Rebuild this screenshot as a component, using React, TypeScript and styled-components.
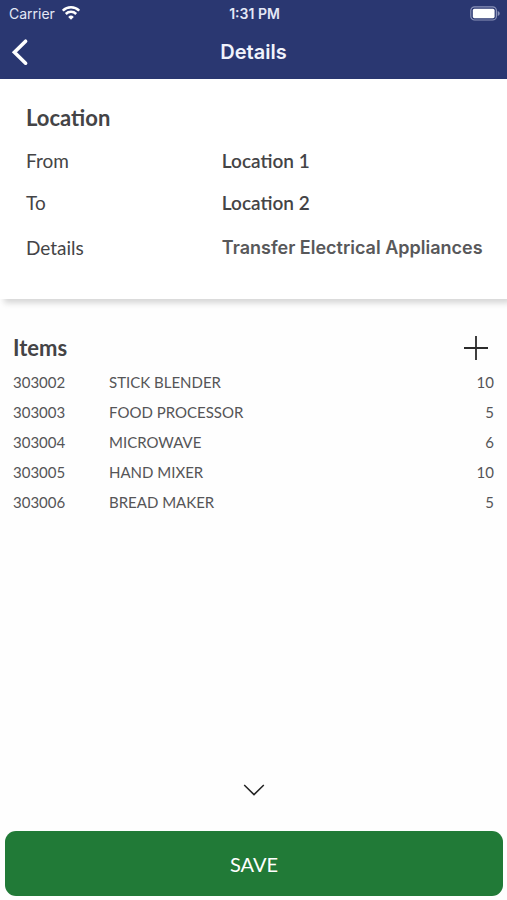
import React from "react";
import styled, { createGlobalStyle } from "styled-components";

const GlobalStyle = createGlobalStyle`
  *, *::before, *::after { box-sizing: border-box; }
  body {
    margin: 0;
    background: #fefefe;
    color: #444446;
    font-family: Lato, "Liberation Sans", sans-serif;
  }
  button { font: inherit; color: inherit; border: 0; background: none; padding: 0; cursor: pointer; }
`;

const Screen = styled.div`
  display: flex;
  flex-direction: column;
  min-height: 100vh;
`;

const Header = styled.header`
  background: #2a3771;
  color: #fff;
  font-family: Inter, "Liberation Sans", sans-serif;
`;

const StatusBar = styled.div`
  display: grid;
  grid-template-columns: 1fr auto 1fr;
  align-items: center;
  height: 26px;
  padding: 0 7px 0 9px;
  font-size: 14px;
  color: #e4e8f6;
`;

const Carrier = styled.span`
  display: flex;
  align-items: center;
  gap: 7px;
`;

const Clock = styled.time`
  font-weight: 600;
`;

const BatteryIcon = styled.svg`
  justify-self: end;
`;

const NavBar = styled.nav`
  display: grid;
  grid-template-columns: 1fr auto 1fr;
  align-items: center;
  height: 53px;
  padding: 0 10px 2px;
`;

const BackButton = styled.button`
  display: flex;
  justify-self: start;
`;

const NavTitle = styled.h1`
  margin: 0;
  font-size: 20px;
  font-weight: 600;
  line-height: 24px;
  color: #f1f3fc;
`;

const LocationCard = styled.section`
  padding: 24px 24px 34px 26px;
  background: #fff;
  box-shadow: 4px 4px 6px rgba(0, 0, 0, 0.16);
`;

const SectionTitle = styled.h2`
  margin: 0;
  font-size: 22px;
  font-weight: 700;
  line-height: 30px;
`;

const FieldList = styled.dl`
  display: flex;
  flex-direction: column;
  gap: 13px;
  margin: 13px 0 0;
`;

const Field = styled.div<{ $tall?: boolean }>`
  display: grid;
  grid-template-columns: 3fr 4fr;
  align-items: center;
  min-height: ${({ $tall }) => ($tall ? "35px" : "29px")};
  font-size: 19px;
  line-height: 29px;
`;

const FieldLabel = styled.dt``;

const FieldValue = styled.dd<{ $system?: boolean }>`
  margin: 0;
  font-weight: 600;
  white-space: nowrap;
  ${({ $system }) =>
    $system &&
    `
    font-family: Inter, "Liberation Sans", sans-serif;
    font-size: 18px;
    color: #58585a;
  `}
`;

const ItemsSection = styled.section`
  flex: 1;
  padding: 34px 13px 0;
`;

const ItemsHeader = styled.div`
  display: flex;
  align-items: center;
  justify-content: space-between;
  padding-right: 5px;
  line-height: 30px;
`;

const IconButton = styled.button`
  display: flex;
`;

const ItemTable = styled.table`
  width: 100%;
  margin-top: 4px;
  border-collapse: collapse;
  font-size: 15px;
  line-height: 30px;
  color: #555557;
`;

const Cell = styled.td`
  padding: 0;
`;

const CodeCell = styled(Cell)`
  width: 96px;
`;

const QuantityCell = styled(Cell)`
  text-align: right;
`;

const Footer = styled.footer`
  display: flex;
  flex-direction: column;
  align-items: center;
  gap: 34px;
  padding: 0 4px 4px 5px;
`;

const SaveButton = styled.button`
  width: 100%;
  height: 65px;
  border-radius: 11px;
  background: #217a37;
  color: #fff;
  font-size: 20px;
`;

const fields = [
  { label: "From", value: "Location 1" },
  { label: "To", value: "Location 2" },
  { label: "Details", value: "Transfer Electrical Appliances", system: true },
];

const items = [
  { code: "303002", name: "STICK BLENDER", quantity: 10 },
  { code: "303003", name: "FOOD PROCESSOR", quantity: 5 },
  { code: "303004", name: "MICROWAVE", quantity: 6 },
  { code: "303005", name: "HAND MIXER", quantity: 10 },
  { code: "303006", name: "BREAD MAKER", quantity: 5 },
];

const Wifi = () => (
  <svg width="18" height="14" viewBox="0 0 18 14" fill="none" stroke="#fff" strokeWidth="2.5" aria-hidden="true">
    <path d="M.8 4.7a11.7 11.7 0 0 1 16.4 0" />
    <path d="M3.8 8a7.4 7.4 0 0 1 10.4 0" />
    <path d="M9 13.7 6.2 10.9a4 4 0 0 1 5.6 0Z" fill="#fff" stroke="none" />
  </svg>
);

const Battery = () => (
  <BatteryIcon width="30" height="15" viewBox="0 0 30 15" role="img" aria-label="Battery full">
    <rect x=".8" y=".8" width="25.6" height="13.2" rx="3.8" fill="none" stroke="#8b93b9" strokeWidth="1.2" />
    <rect x="2.8" y="2.8" width="21.8" height="9.4" rx="1.6" fill="#fff" />
    <path d="M27.7 5v5c1.3-.5 2-1.4 2-2.5s-.7-2-2-2.5Z" fill="#8b93b9" />
  </BatteryIcon>
);

export default function App() {
  return (
    <Screen>
      <GlobalStyle />
      <Header>
        <StatusBar>
          <Carrier>
            Carrier
            <Wifi />
          </Carrier>
          <Clock dateTime="13:31">1:31 PM</Clock>
          <Battery />
        </StatusBar>
        <NavBar>
          <BackButton type="button" aria-label="Back">
            <svg width="20" height="28" viewBox="0 0 20 28" fill="none" stroke="#fff" strokeWidth="3.6" strokeLinecap="round">
              <path d="M15.6 3.2 4.4 14.3 15.6 25.2" strokeLinejoin="miter" />
            </svg>
          </BackButton>
          <NavTitle>Details</NavTitle>
        </NavBar>
      </Header>

      <LocationCard>
        <SectionTitle>Location</SectionTitle>
        <FieldList>
          {fields.map((field) => (
            <Field key={field.label} $tall={field.system}>
              <FieldLabel>{field.label}</FieldLabel>
              <FieldValue $system={field.system}>{field.value}</FieldValue>
            </Field>
          ))}
        </FieldList>
      </LocationCard>

      <ItemsSection>
        <ItemsHeader>
          <SectionTitle>Items</SectionTitle>
          <IconButton type="button" aria-label="Add item">
            <svg width="26" height="26" viewBox="0 0 26 26" fill="none" stroke="#2b2b2b" strokeWidth="1.8">
              <path d="M13 1v24M1 13h24" />
            </svg>
          </IconButton>
        </ItemsHeader>
        <ItemTable aria-label="Items">
          <tbody>
            {items.map((item) => (
              <tr key={item.code}>
                <CodeCell>{item.code}</CodeCell>
                <Cell>{item.name}</Cell>
                <QuantityCell>{item.quantity}</QuantityCell>
              </tr>
            ))}
          </tbody>
        </ItemTable>
      </ItemsSection>

      <Footer>
        <IconButton type="button" aria-label="Show more">
          <svg width="22" height="14" viewBox="0 0 22 14" fill="none" stroke="#222" strokeWidth="1.5">
            <path d="M1.2 2 11 11.6 20.8 2" />
          </svg>
        </IconButton>
        <SaveButton type="button">SAVE</SaveButton>
      </Footer>
    </Screen>
  );
}
